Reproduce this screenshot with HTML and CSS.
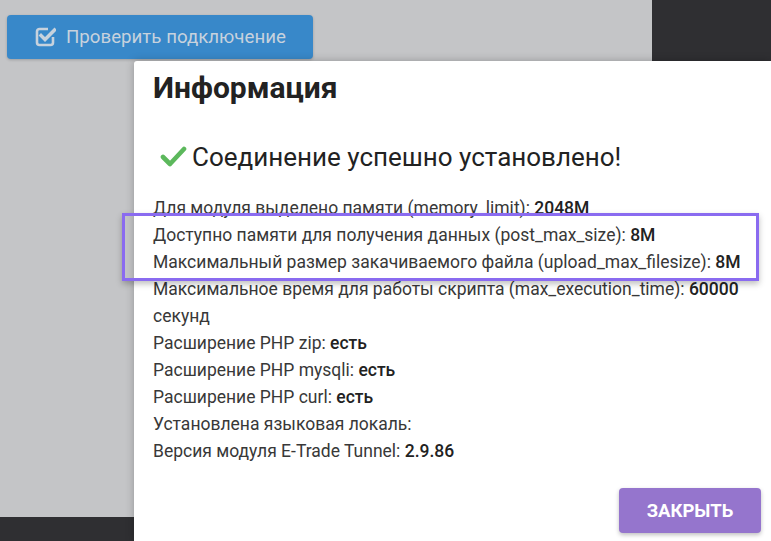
FILE: index.html
```html
<!DOCTYPE html>
<html lang="ru">
<head>
  <meta charset="UTF-8">
  <meta name="viewport" content="width=device-width, initial-scale=1.0">
  <title>Информация</title>
  <link rel="stylesheet" href="styles.css">
</head>
<body>
  <div class="toolbar">
    <button class="btn-check" disabled>
      <svg class="btn-icon" width="22" height="22" viewBox="0 0 22 22">
        <path d="M14 4H5.5A2.5 2.5 0 0 0 3 6.5v11A2.5 2.5 0 0 0 5.5 20h11a2.5 2.5 0 0 0 2.5-2.5V12" fill="none" stroke="currentColor" stroke-width="2.6"/>
        <path d="M7 10.5l4 4L20.5 5" fill="none" stroke="currentColor" stroke-width="3.4" stroke-linecap="square"/>
      </svg>
      Проверить подключение
    </button>
  </div>

  <!-- Modal -->
  <div class="modal">
    <h2 class="modal-title">Информация</h2>

    <div class="success">
      <svg class="success-icon" width="27" height="21" viewBox="0 0 27 21">
        <path d="M3 11l7 7L24 3" fill="none" stroke="#5cb85c" stroke-width="4.6" stroke-linecap="round" stroke-linejoin="round"/>
      </svg>
      <span>Соединение успешно установлено!</span>
    </div>

    <ul class="info-list">
      <li>Для модуля выделено памяти (memory_limit): <b>2048M</b></li>
      <li>Доступно памяти для получения данных (post_max_size): <b>8M</b></li>
      <li>Максимальный размер закачиваемого файла (upload_max_filesize): <b>8M</b></li>
      <li>Максимальное время для работы скрипта (max_execution_time): <b>60000</b> секунд</li>
      <li>Расширение PHP zip: <b>есть</b></li>
      <li>Расширение PHP mysqli: <b>есть</b></li>
      <li>Расширение PHP curl: <b>есть</b></li>
      <li>Установлена языковая локаль:</li>
      <li>Версия модуля E-Trade Tunnel: <b>2.9.86</b></li>
    </ul>

    <div class="modal-footer">
      <button class="btn-close">Закрыть</button>
    </div>
  </div>

  <!-- Highlight annotation -->
  <div class="highlight"></div>
</body>
</html>
```

FILE: styles.css
```css
* {
  margin: 0;
  padding: 0;
  box-sizing: border-box;
}

body {
  width: 771px;
  height: 541px;
  overflow: hidden;
  position: relative;
  font-family: Roboto, "Noto Sans", sans-serif;
  color: #333;
  background:
    linear-gradient(#2f2f32, #2f2f32) right top / 119px 61px no-repeat,
    linear-gradient(#2f2f32, #2f2f32) left bottom / 134px 24px no-repeat,
    #c4c5c7;
}

.toolbar {
  padding: 15px 0 0 7px;
}

.btn-check {
  display: flex;
  align-items: center;
  gap: 10px;
  width: 306px;
  height: 44px;
  padding: 0 0 0 27px;
  border: none;
  border-radius: 4px;
  background: #3888c9;
  color: #c7d2dd;
  font-family: Roboto, sans-serif;
  font-size: 18.7px;
  box-shadow: 0 1px 3px rgba(0, 0, 0, 0.2);
}

.btn-icon {
  margin-top: -2px;
}

.modal {
  position: absolute;
  left: 134px;
  top: 61px;
  right: 0;
  bottom: 0;
  background: #fff;
  padding: 10px 19px 0 19px;
  box-shadow: 0 0 8px rgba(0, 0, 0, 0.25);
  border-top-left-radius: 3px;
}

.modal-title {
  font-size: 30px;
  line-height: 34px;
  font-weight: 700;
  color: #222;
}

.success {
  display: flex;
  align-items: center;
  gap: 5px;
  margin-top: 37px;
  padding-left: 7px;
  font-size: 26px;
  line-height: 30px;
  color: #222;
}

.success-icon {
  margin-top: -2px;
}

.info-list {
  list-style: none;
  margin-top: 23px;
  font-size: 17.5px;
  line-height: 27px;
  color: #383838;
}

.info-list b {
  font-weight: 500;
  color: #222;
}

.modal-footer {
  display: flex;
  justify-content: flex-end;
  margin: 23px -9px 0 0;
}

.btn-close {
  width: 142px;
  height: 45px;
  border: none;
  border-radius: 4px;
  background: #9575cd;
  color: #fff;
  font-family: Roboto, sans-serif;
  font-size: 18.5px;
  font-weight: 700;
  text-transform: uppercase;
  box-shadow: 0 2px 4px rgba(0, 0, 0, 0.25);
}

.highlight {
  position: absolute;
  left: 122px;
  top: 213px;
  width: 637px;
  height: 68px;
  border: 3px solid #8a6bf0;
  box-shadow: 0 3px 6px rgba(0, 0, 0, 0.25);
}
```
